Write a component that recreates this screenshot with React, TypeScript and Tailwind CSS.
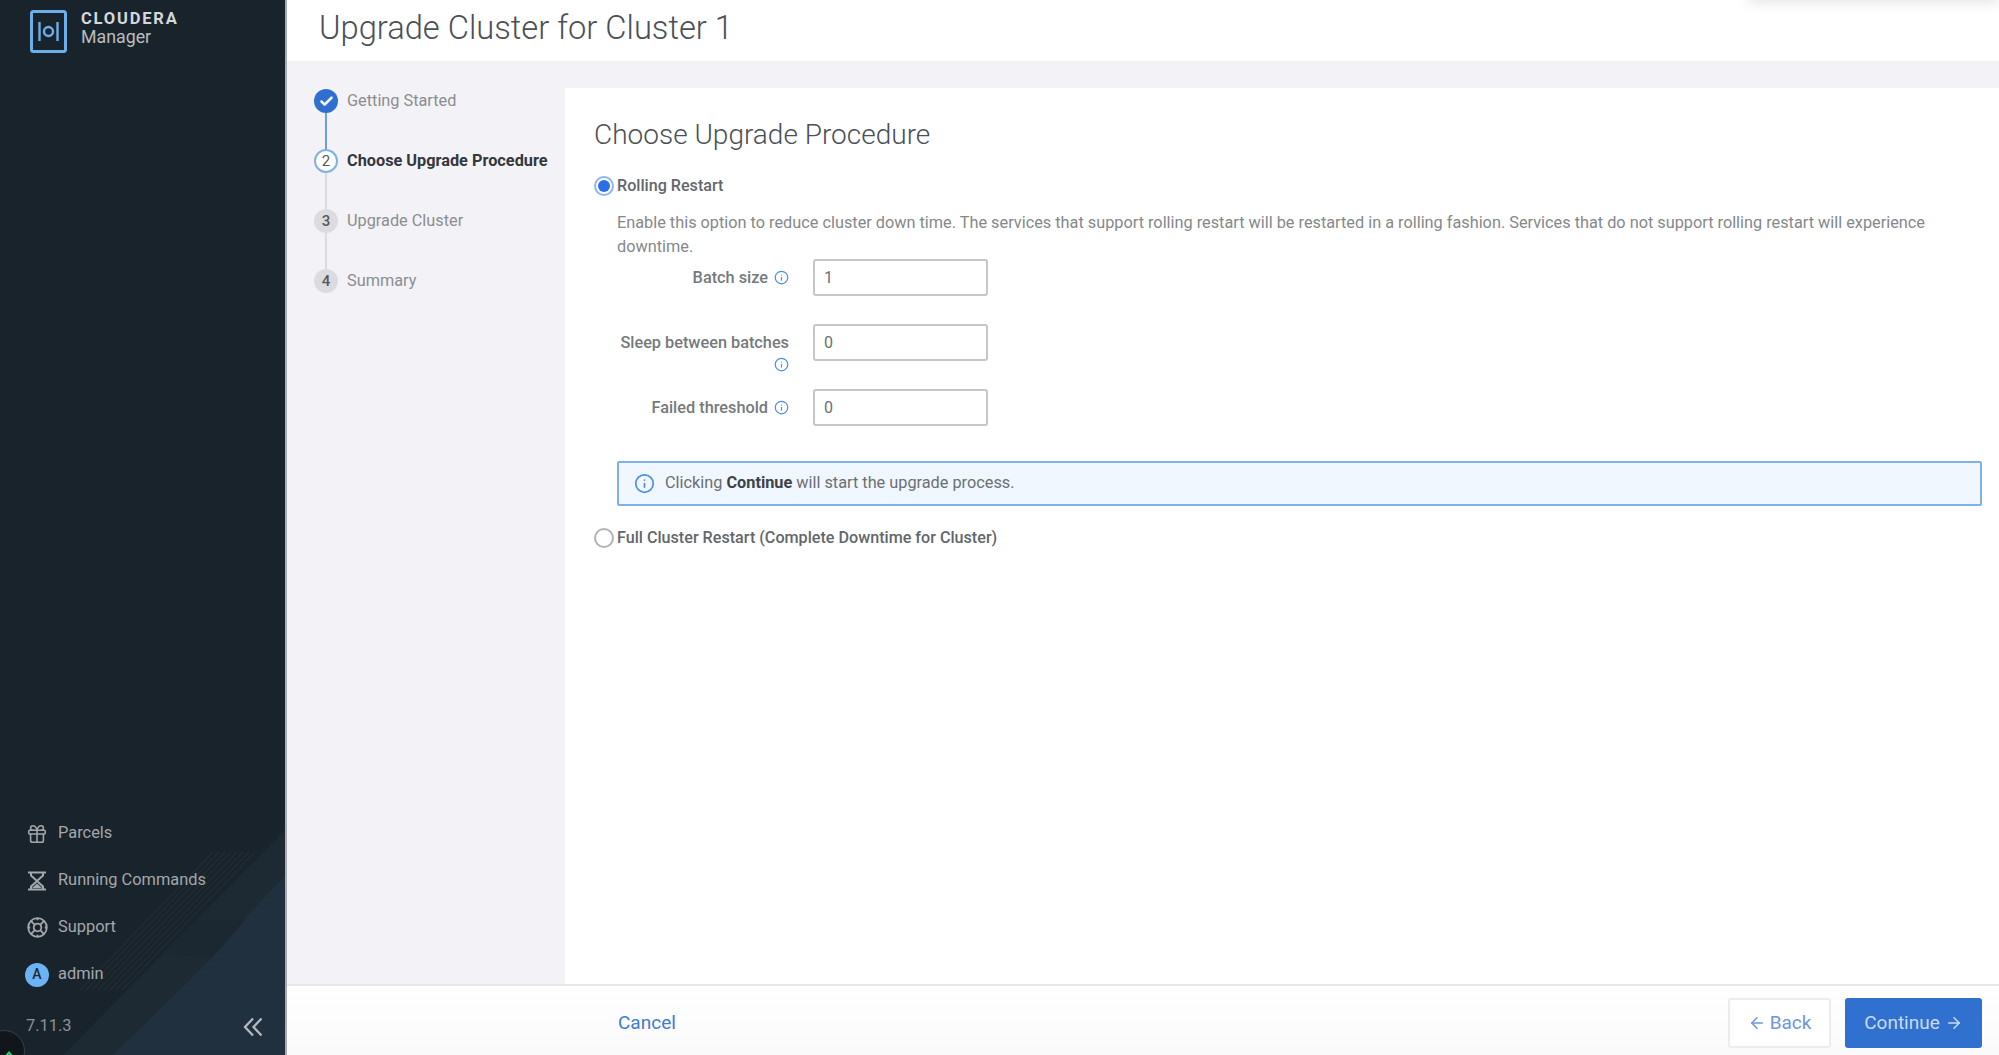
import React from "react";
import { Gift, ArrowLeft, ArrowRight, Info, Check } from "lucide-react";

function NavItem({ icon, label }: { icon: React.ReactNode; label: string }) {
  return (
    <div className="flex h-[47px] items-center">
      <div className="flex w-[32px] justify-center">{icon}</div>
      <span className="ml-[5px] text-[16.4px] text-[#a3a8ac]">{label}</span>
    </div>
  );
}

function Step({ n, label, state }: { n: number; label: string; state: "done" | "active" | "todo" }) {
  return (
    <div className="flex h-[24px] items-center">
      {state === "done" && (
        <div className="flex h-[24px] w-[24px] items-center justify-center rounded-full bg-[#2f6fcf]">
          <Check size={15} strokeWidth={4} className="text-white" />
        </div>
      )}
      {state === "active" && (
        <div className="flex h-[24px] w-[24px] items-center justify-center rounded-full border-2 border-[#7fb0e6] bg-white text-[15px] text-[#555b61]">
          {n}
        </div>
      )}
      {state === "todo" && (
        <div className="flex h-[24px] w-[24px] items-center justify-center rounded-full bg-[#dcdce0] text-[15px] font-medium text-[#55595e]">
          {n}
        </div>
      )}
      <span
        className={
          state === "active"
            ? "ml-[9px] text-[16.3px] font-bold whitespace-nowrap text-[#33383d]"
            : "ml-[9px] text-[16.3px] whitespace-nowrap text-[#8b8d90]"
        }
      >
        {label}
      </span>
    </div>
  );
}

function FieldRow({ label, value, wrap }: { label: string; value: string; wrap?: boolean }) {
  return (
    <div className="flex h-[37px] items-start">
      <div className={wrap ? "w-[196px] pr-[24px] pt-[6px] text-right text-[16.3px] leading-[25px] font-medium text-[#75797d]" : "w-[196px] pr-[23px] pt-[6px] text-right text-[16.3px] leading-[25px] font-medium text-[#75797d]"}>
        {wrap ? (
          <>
            <div className="whitespace-nowrap">{label}</div>
            <div className="flex justify-end">
              <Info size={15} strokeWidth={2} className="mt-[2px] text-[#4d8fe0]" />
            </div>
          </>
        ) : (
          <div className="flex items-center justify-end gap-[6px] whitespace-nowrap">
            {label}
            <Info size={15} strokeWidth={2} className="mr-[1px] text-[#4d8fe0]" />
          </div>
        )}
      </div>
      <div className="flex h-[37px] w-[175px] items-center rounded-[3px] border-2 border-[#c4c6c8] bg-white px-[9px] text-[16px] text-[#6b6f73]">
        {value}
      </div>
    </div>
  );
}

export default function App() {
  return (
    <div className="relative flex h-screen w-full overflow-hidden bg-white font-['Roboto',sans-serif]">
      <aside className="relative flex w-[287px] shrink-0 flex-col border-r-2 border-[#a9acae] bg-[#19232b]">
        <svg className="absolute bottom-0 left-0 h-[225px] w-[285px]" viewBox="0 0 285 225" fill="none">
          <polygon points="285,0 285,225 63,225" fill="#1d2a34" />
          <polygon points="285,46 285,225 113,225 212,128 245,88" fill="#21303e" />
          <polygon points="245,90 195,90 165,122 212,128" fill="#1b2731" />
          <g stroke="#273139" strokeWidth="1">
            <line x1="213" y1="22" x2="80" y2="160" />
            <line x1="219" y1="22" x2="86" y2="160" />
            <line x1="225" y1="22" x2="92" y2="160" />
            <line x1="231" y1="22" x2="98" y2="160" />
            <line x1="237" y1="22" x2="104" y2="160" />
            <line x1="243" y1="22" x2="110" y2="160" />
            <line x1="249" y1="22" x2="116" y2="160" />
            <line x1="255" y1="22" x2="122" y2="160" />
          </g>
        </svg>
        <div className="relative flex items-start pl-[30px] pt-[10px]">
          <svg width="37" height="43" viewBox="0 0 37 43" fill="none" stroke="#6aaeea">
            <rect x="1.5" y="1.5" width="34" height="40" rx="2" strokeWidth="3" />
            <line x1="9.5" y1="12" x2="9.5" y2="31" strokeWidth="2.4" />
            <line x1="27.5" y1="12" x2="27.5" y2="31" strokeWidth="2.4" />
            <circle cx="18.5" cy="21.5" r="4.5" strokeWidth="2.4" />
          </svg>
          <div className="ml-[14px] flex flex-col">
            <span className="text-[16.5px] leading-[18px] font-bold tracking-[1.8px] text-[#d5d8da]">CLOUDERA</span>
            <span className="text-[17.8px] leading-[18px] text-[#b9bdc0]">Manager</span>
          </div>
        </div>
        <div className="relative mt-auto flex flex-col pl-[21px]">
          <NavItem icon={<Gift size={22} strokeWidth={1.7} className="text-[#a3a8ac]" />} label="Parcels" />
          <NavItem
            icon={
              <svg width="20" height="20" viewBox="0 0 20 20" fill="none" stroke="#a3a8ac" strokeWidth="2">
                <path d="M1 1.5h18M1 18.5h18" />
                <path d="M4 2v2.5L10 10l6-5.5V2M4 18v-2.5L10 10l6 5.500V18" />
                <path d="M5 17l5-4.500 5 4.500z" fill="#a3a8ac" stroke="none" />
              </svg>
            }
            label="Running Commands"
          />
          <NavItem
            icon={
              <svg width="21" height="21" viewBox="0 0 21 21" fill="none" stroke="#a3a8ac" strokeWidth="1.8">
                <circle cx="10.500" cy="10.500" r="9.300" />
                <circle cx="10.500" cy="10.500" r="3.800" />
                <path d="M3.900 3.900l3.900 3.900M17.100 3.900l-3.900 3.900M3.900 17.100l3.900-3.900M17.100 17.100l-3.900-3.900M10.500 1.200v2M10.500 17.800v2M1.200 10.500h2M17.800 10.500h2" />
              </svg>
            }
            label="Support"
          />
          <NavItem
            icon={
              <div className="flex h-[24px] w-[24px] items-center justify-center rounded-full bg-[#6cb2f5] text-[14px] font-medium text-[#1c2a36]">
                A
              </div>
            }
            label="admin"
          />
        </div>
        <div className="relative flex h-[57px] items-center justify-between pl-[26px] pr-[22px]">
          <span className="text-[16.4px] text-[#8d9296]">7.11.3</span>
          <svg width="20" height="20" viewBox="0 0 20 20" fill="none" stroke="#b4b9bd" strokeWidth="2.3">
            <path d="M10 1.500L2 10l8 8.500M18.500 1.500L10.500 10l8 8.500" />
          </svg>
        </div>
        <div className="absolute bottom-[-17px] left-[-17px] flex h-[42px] w-[42px] items-start justify-center rounded-full border border-[#3a4148] bg-[#10161b] pl-[10px] pt-[22px]">
          <div className="h-[8px] w-[8px] rotate-45 border-l-2 border-t-2 border-[#2ecc71]" />
        </div>
      </aside>

      <main className="flex min-w-0 flex-1 flex-col">
        <header className="flex h-[61px] shrink-0 items-center bg-white pb-[3px] pl-[32px]">
          <h1 className="text-[32.7px] font-light text-[#4b5056]">Upgrade Cluster for Cluster 1</h1>
        </header>
        <div className="flex min-h-0 flex-1 bg-[#f3f3f7]">
          <nav className="relative w-[278px] shrink-0 pl-[27px] pt-[28px]">
            <div className="relative flex flex-col gap-[36px]">
              <div className="absolute left-[11px] top-[24px] h-[37px] w-[2px] bg-[#6b9fdc]" />
              <div className="absolute left-[11px] top-[84px] h-[120px] w-[2px] bg-[#dcdce0]" />
              <div className="relative"><Step n={1} label="Getting Started" state="done" /></div>
              <div className="relative"><Step n={2} label="Choose Upgrade Procedure" state="active" /></div>
              <div className="relative"><Step n={3} label="Upgrade Cluster" state="todo" /></div>
              <div className="relative"><Step n={4} label="Summary" state="todo" /></div>
            </div>
          </nav>
          <div className="mt-[27px] flex min-w-0 flex-1 flex-col bg-white pl-[29px] pr-[17px]">
            <h2 className="mt-[28px] text-[28px] leading-[38px] font-light text-[#4b5056]">Choose Upgrade Procedure</h2>
            <div className="mt-[20px] flex h-[24px] items-center">
              <span className="flex h-[20px] w-[20px] items-center justify-center rounded-full border-2 border-[#8db4f5] bg-white">
                <span className="h-[12px] w-[12px] rounded-full bg-[#2a6fe8]" />
              </span>
              <span className="ml-[3px] text-[16.15px] font-medium text-[#63676b]">Rolling Restart</span>
            </div>
            <div className="ml-[23px]">
              <p className="mt-[13px] text-[16.3px] leading-[24px] text-[#85888b]">
                Enable this option to reduce cluster down time. The services that support rolling restart will be restarted in a rolling fashion. Services that do not support rolling restart will experience downtime.
              </p>
              <div className="flex flex-col gap-[28px]">
                <FieldRow label="Batch size" value="1" />
                <FieldRow label="Sleep between batches" value="0" wrap />
                <FieldRow label="Failed threshold" value="0" />
              </div>
              <div className="mt-[35px] flex h-[45px] items-center rounded-[2px] border-2 border-[#7fb0ee] bg-[#f0f7ff] pl-[15px] text-[16.3px] text-[#6b6f73]">
                <Info size={21} strokeWidth={2} className="text-[#4d8fe8]" />
                <span className="ml-[10px]">
                  Clicking <b className="font-bold text-[#3e4347]">Continue</b> will start the upgrade process.
                </span>
              </div>
            </div>
            <div className="mt-[20px] flex h-[24px] items-center">
              <span className="h-[20px] w-[20px] rounded-full border-2 border-[#b1b3b5] bg-white" />
              <span className="ml-[3px] text-[16.15px] font-medium text-[#63676b]">Full Cluster Restart (Complete Downtime for Cluster)</span>
            </div>
          </div>
        </div>
        <footer className="flex h-[71px] shrink-0 items-center justify-between border-t-2 border-[#e8e8ea] bg-gradient-to-b from-white to-[#fafafa] pl-[331px] pr-[17px] pt-[5px]">
          <a className="text-[19px] text-[#3f7bd4]">Cancel</a>
          <div className="flex items-center gap-[14px]">
            <button className="flex h-[50px] w-[103px] items-center justify-center gap-[4px] rounded-[3px] border-2 border-[#ececee] bg-white text-[19px] text-[#6f96db]">
              <ArrowLeft size={18} strokeWidth={2} />
              Back
            </button>
            <button className="flex h-[50px] w-[137px] items-center justify-center gap-[5px] rounded-[3px] bg-[#3070ce] text-[19px] text-[#c9daf3]">
              Continue
              <ArrowRight size={18} strokeWidth={2} />
            </button>
          </div>
        </footer>
      </main>
      <div className="absolute -top-[20px] right-0 h-[20px] w-[250px] shadow-[0_2px_14px_rgba(0,0,0,0.12)]" />
    </div>
  );
}
